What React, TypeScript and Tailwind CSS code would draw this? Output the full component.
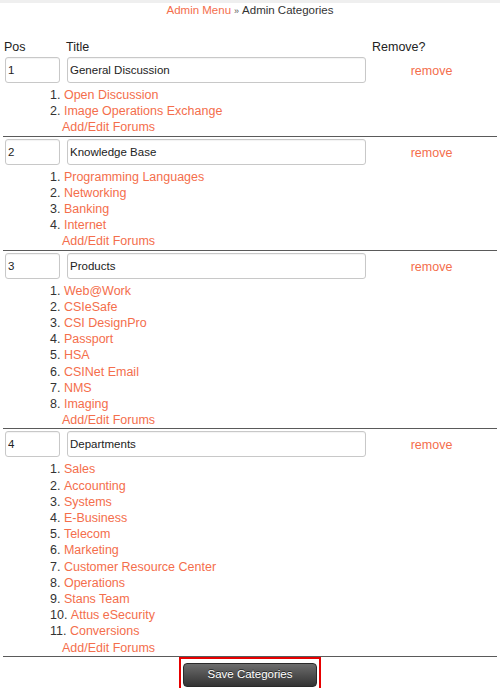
import React from "react";

type Category = {
  pos: string;
  title: string;
  forums: string[];
};

const categories: Category[] = [
  {
    pos: "1",
    title: "General Discussion",
    forums: ["Open Discussion", "Image Operations Exchange"],
  },
  {
    pos: "2",
    title: "Knowledge Base",
    forums: ["Programming Languages", "Networking", "Banking", "Internet"],
  },
  {
    pos: "3",
    title: "Products",
    forums: [
      "Web@Work",
      "CSIeSafe",
      "CSI DesignPro",
      "Passport",
      "HSA",
      "CSINet Email",
      "NMS",
      "Imaging",
    ],
  },
  {
    pos: "4",
    title: "Departments",
    forums: [
      "Sales",
      "Accounting",
      "Systems",
      "E-Business",
      "Telecom",
      "Marketing",
      "Customer Resource Center",
      "Operations",
      "Stans Team",
      "Attus eSecurity",
      "Conversions",
    ],
  },
];

function CategoryBlock({ cat }: { cat: Category }) {
  return (
    <div className="mx-[3px] border-b border-[#5a5a5a] pt-[2px]">
      {/* inputs row */}
      <div className="flex items-center pl-[2px]">
        <input
          readOnly
          value={cat.pos}
          className="w-[55px] h-[26px] border border-[#c8c8c8] rounded-[3px] bg-white pl-[2px] text-[11.5px] text-[#222] shadow-[inset_0_1px_1px_rgba(0,0,0,0.05)] outline-none"
        />
        <input
          readOnly
          value={cat.title}
          className="ml-[7px] w-[299px] h-[26px] border border-[#c8c8c8] rounded-[3px] bg-white pl-[2px] text-[11.5px] text-[#222] shadow-[inset_0_1px_1px_rgba(0,0,0,0.05)] outline-none"
        />
        <div className="flex-1 text-center">
          <a className="text-[12.5px] text-[#f46e4c] cursor-pointer">remove</a>
        </div>
      </div>

      {/* forums */}
      <ol className="mt-[4px] list-decimal list-inside pl-[47px] text-[12.5px] leading-[16.2px] text-[#333]">
        {cat.forums.map((f) => (
          <li key={f}>
            <a className="text-[#f46e4c] cursor-pointer">{f}</a>
          </li>
        ))}
      </ol>
      <div className="pl-[59px] text-[12.5px] leading-[16.2px]">
        <a className="text-[#f46e4c] cursor-pointer">Add/Edit Forums</a>
      </div>
    </div>
  );
}

export default function App() {
  return (
    <div className="w-[500px] h-[688px] overflow-hidden bg-white font-['Liberation_Sans',Arial,sans-serif] text-[#333]">
      <div className="h-[3px] bg-[#efefef]" />

      {/* Breadcrumb */}
      <div className="text-center text-[11.5px] leading-[14px]">
        <a className="text-[#f46e4c] cursor-pointer">Admin Menu</a>
        <span className="text-[9px] text-[#555] mx-[3px]">»</span>
        <span>Admin Categories</span>
      </div>

      {/* Header */}
      <div className="mt-[21px] flex pl-[4px] text-[12.5px] leading-[16px] text-[#222]">
        <div className="w-[62px]">Pos</div>
        <div className="w-[306px]">Title</div>
        <div>Remove?</div>
      </div>

      <div>
        {categories.map((c) => (
          <CategoryBlock key={c.pos} cat={c} />
        ))}
      </div>

      {/* Save */}
      <div className="mx-auto w-[142px] border-2 border-[#e60000] p-[2px]">
        <button
          type="button"
          className="w-full h-[24px] rounded-[4px] bg-gradient-to-b from-[#6d6d6d] to-[#343434] border border-[#2a2a2a] text-white text-[11.5px] [text-shadow:0_-1px_0_rgba(0,0,0,0.6)]"
        >
          Save Categories
        </button>
      </div>

      {/* next section, cut off */}
      <div className="flex items-start pl-[5px] pt-[1px]">
        <div className="w-[55px] h-[20px] border border-[#d0d0d0] rounded-[3px]" />
        <div className="ml-[7px] w-[299px] h-[20px] border border-[#d0d0d0] rounded-[3px]" />
        <div className="ml-[18px] w-[113px] h-[20px] rounded-[3px] bg-[#444]" />
      </div>
    </div>
  );
}
